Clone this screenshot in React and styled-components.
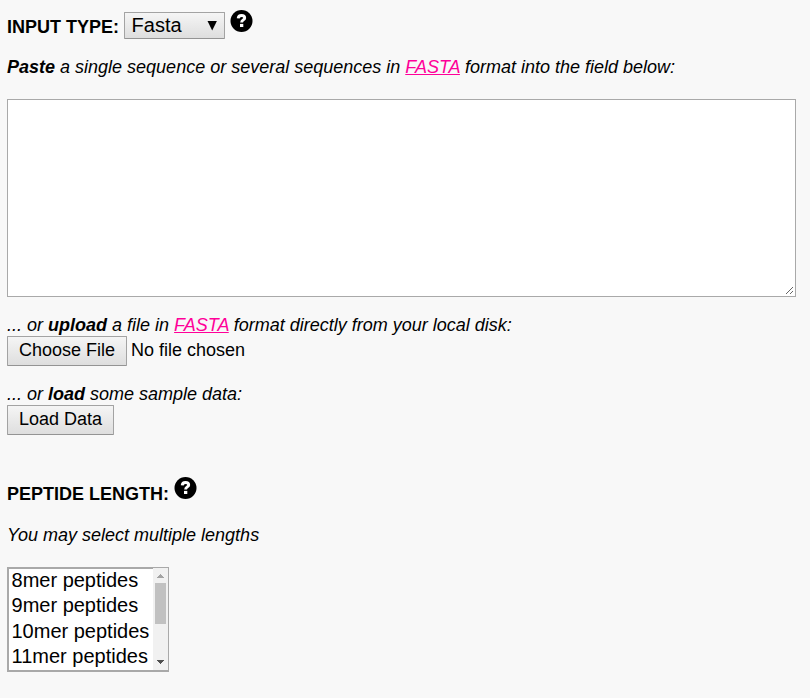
import React from "react";
import styled, { createGlobalStyle } from "styled-components";

const GlobalStyle = createGlobalStyle`
  * { box-sizing: border-box; }
  body {
    margin: 0;
    background: #f8f8f8;
    color: #000;
    font: 18px/20px "Liberation Sans", Arial, sans-serif;
  }
`;

const Page = styled.main`
  display: flex;
  flex-direction: column;
  align-items: flex-start;
  width: 810px;
  height: 698px;
  padding: 10px 14px 0 7px;
  overflow: hidden;
`;

const Heading = styled.div`
  display: flex;
  align-items: flex-start;
  height: 30px;
  margin-top: ${(p) => p.$top || 0}px;
`;

const Label = styled.label`
  padding-top: 7px;
  font-weight: bold;
  white-space: nowrap;
`;

const Select = styled.button`
  display: flex;
  justify-content: space-between;
  width: 101px;
  height: 27px;
  margin: 2px 5px 0;
  padding: 1px 7px 0 6.6px;
  border: 1px solid #a3a3a3;
  border-bottom-color: #949494;
  border-radius: 1px;
  background: linear-gradient(#f5f5f5, #dedede);
  color: #000;
  font: 20px/23px "Liberation Sans", Arial, sans-serif;

  svg { margin-top: 7px; }
`;

const Help = styled.svg`
  width: 23px;
  height: 22px;
  margin-left: ${(p) => p.$gap || 0}px;
`;

const Note = styled.p`
  height: 20px;
  margin: ${(p) => p.$top || 0}px 0 0;
  font-style: italic;
  white-space: nowrap;
`;

const Link = styled.a`
  color: #ff0099;
  text-decoration: underline;
`;

const SequenceFrame = styled.div`
  width: 789px;
  height: 198px;
  margin: 22px 0 18px;
  padding: 0 1px 1px 0;
  border: 1px solid #a9a9a9;
  background: #fff;
`;

const SequenceField = styled.textarea`
  display: block;
  width: 100%;
  height: 100%;
  border: 0;
  background: #fff;
  resize: vertical;
  outline: none;
`;

const FileRow = styled.div`
  display: flex;
  gap: 4px;
  margin-top: 1px;
  line-height: 28px;
`;

const Button = styled.button`
  width: ${(p) => p.$width}px;
  height: 30px;
  padding: 0 0 2px;
  border: 1px solid #a3a3a3;
  border-bottom-color: #949494;
  border-radius: 1px;
  background: linear-gradient(#f5f5f5, #dedede);
  color: #000;
  font: 18px/20px "Liberation Sans", Arial, sans-serif;
`;

const ListBox = styled.div`
  display: flex;
  width: 162px;
  height: 105px;
  margin-top: 22px;
  border: 2px solid #a9a9a9;
  border-right-width: 1px;
  background: #fff;
`;

const Options = styled.ul`
  flex: 1;
  margin: 0;
  padding: 0 0 0 2.5px;
  list-style: none;
  overflow: hidden;
`;

const Option = styled.li`
  height: 25.4px;
  font-size: 20px;
  line-height: 23px;
  white-space: nowrap;
`;

const ScrollTrack = styled.div`
  display: flex;
  flex-direction: column;
  align-items: center;
  width: 15px;
  height: 102px;
  margin-top: -1px;
  background: #f1f1f1;
`;

const ScrollThumb = styled.div`
  width: 11px;
  height: 41px;
  margin-bottom: 30px;
  background: #c1c1c1;
`;

function HelpIcon({ gap }) {
  return (
    <Help $gap={gap} viewBox="0 0 23 22" role="img" aria-label="Help">
      <circle cx="11.5" cy="11" r="11" fill="#000" />
      <path d="M8.2 8.4C8.3 6.4 9.6 5.5 11.5 5.5s3.2.9 3.2 2.4c0 2.1-3.1 2-3.1 4.6" fill="none" stroke="#fff" strokeWidth="2.9" />
      <rect x="10" y="13.9" width="3.3" height="3.1" fill="#fff" />
    </Help>
  );
}

function ScrollArrow({ down }) {
  return (
    <svg width="15" height="15" viewBox="0 0 15 15" shapeRendering="crispEdges">
      <path
        d={down ? "M4 6h7v1h-1v1H9v1H8v1H7V9H6V8H5V7H4z" : "M7 6h1v1h1v1h1v1h1v1H4V9h1V8h1V7h1z"}
        fill={down ? "#505050" : "#a3a3a3"}
      />
    </svg>
  );
}

export default function App() {
  return (
    <>
      <GlobalStyle />
      <Page>
        <Heading>
          <Label>INPUT TYPE:</Label>
          <Select type="button">
            Fasta
            <svg width="10" height="10" viewBox="0 0 10 10"><path d="M.5 0h9.4L5.2 9.6z" fill="#000" /></svg>
          </Select>
          <HelpIcon />
        </Heading>
        <Note $top={17}>
          <b>Paste</b> a single sequence or several sequences in <Link href="#">FASTA</Link> format into the field below:
        </Note>
        <SequenceFrame>
          <SequenceField aria-label="Sequences" />
        </SequenceFrame>
        <Note>
          ... or <b>upload</b> a file in <Link href="#">FASTA</Link> format directly from your local disk:
        </Note>
        <FileRow>
          <Button type="button" $width={120}>Choose File</Button>
          <span>No file chosen</span>
        </FileRow>
        <Note $top={18}>
          ... or <b>load</b> some sample data:
        </Note>
        <FileRow>
          <Button type="button" $width={107}>Load Data</Button>
        </FileRow>
        <Heading $top={42}>
          <Label>PEPTIDE LENGTH:</Label>
          <HelpIcon gap={5} />
        </Heading>
        <Note $top={18}>You may select multiple lengths</Note>
        <ListBox>
          <Options>
            {[8, 9, 10, 11].map((n) => <Option key={n}>{n}mer peptides</Option>)}
          </Options>
          <ScrollTrack>
            <ScrollArrow />
            <ScrollThumb />
            <ScrollArrow down />
          </ScrollTrack>
        </ListBox>
      </Page>
    </>
  );
}
